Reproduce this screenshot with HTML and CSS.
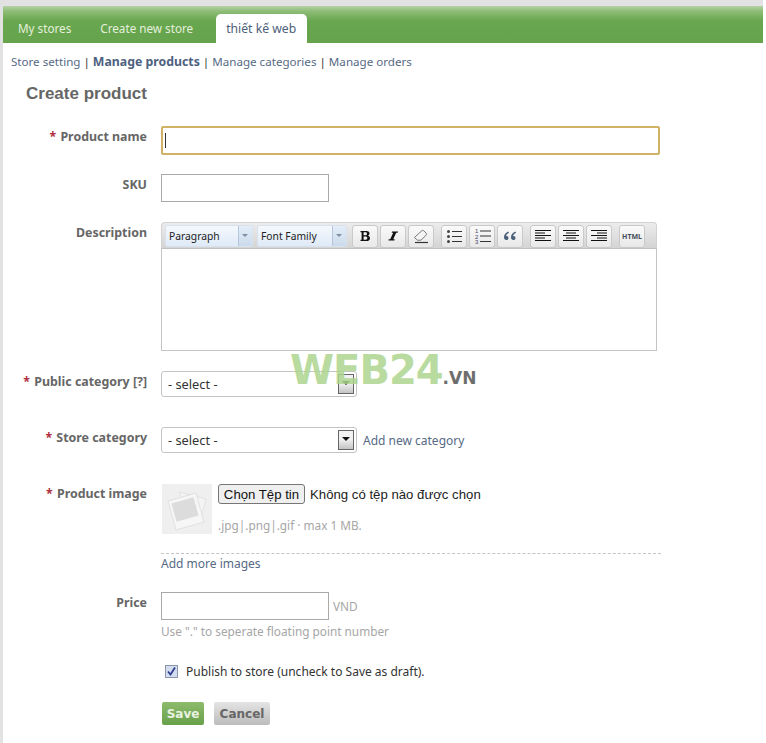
FILE: index.html
```html
<!DOCTYPE html>
<html lang="en">
<head>
    <meta charset="UTF-8">
    <meta name="viewport" content="width=device-width, initial-scale=1.0">
    <title>Create product</title>
    <link rel="stylesheet" href="styles.css">
</head>
<body>
  <div class="page">
    <nav class="tabs">
      <a class="tab">My stores</a>
      <a class="tab">Create new store</a>
      <a class="tab tab-active">thiết kế web</a>
    </nav>

    <div class="subnav">
      <a>Store setting</a> <span class="sep">|</span>
      <a class="current">Manage products</a> <span class="sep">|</span>
      <a>Manage categories</a> <span class="sep">|</span>
      <a>Manage orders</a>
    </div>

    <h1 class="title">Create product</h1>

    <form class="form">
      <div class="row row-name">
        <label class="label"><span class="req">*</span> Product name</label>
        <div class="field"><div class="input input-focus"><i class="caret"></i></div></div>
      </div>

      <div class="row row-sku">
        <label class="label">SKU</label>
        <div class="field"><div class="input input-short"></div></div>
      </div>

      <div class="row row-desc">
        <label class="label">Description</label>
        <div class="field">
          <div class="editor">
            <div class="toolbar">
              <div class="combo combo-para"><span>Paragraph</span><i class="combo-arrow"></i></div>
              <div class="combo combo-font"><span>Font Family</span><i class="combo-arrow"></i></div>

              <div class="tool">
                <svg width="14" height="14" viewBox="0 0 14 14"><path d="M2.500 2h6c2.200 0 3 1 3 2.600 0 1.200-.8 1.900-1.800 2.200 1.400.2 2.300 1.100 2.300 2.400 0 1.900-1.300 2.800-3.400 2.800h-6.100v-1.200h1.100v-7.600h-1.100zM5.600 3.300v2.900h1.900c.9 0 1.400-.5 1.400-1.500s-.5-1.400-1.400-1.400zM5.600 7.400v3.300h2.100c1 0 1.600-.5 1.600-1.600 0-1.200-.6-1.700-1.600-1.700z" fill="#111"/></svg>
              </div>
              <div class="tool">
                <svg width="14" height="14" viewBox="0 0 14 14"><path d="M6 2.500h6l-.3 1.300h-1.500l-3 6.400h1.500l-.3 1.300h-6l.3-1.300h1.500l3-6.400h-1.500z" fill="#111"/></svg>
              </div>
              <div class="tool">
                <svg width="18" height="16" viewBox="0 0 18 16"><path d="M2.500 9.500l7-6.500c.8-.7 1.800-.7 2.500 0l2 2c.7.700.6 1.500 0 2.200l-5 5h-3.500z" fill="#f4f4f4" stroke="#777"/><path d="M3 14.500h13" stroke="#333" stroke-width="1.200"/></svg>
              </div>

              <div class="tool tool-gap">
                <svg width="16" height="14" viewBox="0 0 16 14"><g fill="#444"><rect x="1" y="1" width="3" height="3" rx="1.500"/><rect x="1" y="6" width="3" height="3" rx="1.500"/><rect x="1" y="11" width="3" height="3" rx="1.500"/></g><g stroke="#333"><path d="M6 2.500h10M6 7.500h10M6 12.500h10"/></g></svg>
              </div>
              <div class="tool">
                <svg width="17" height="16" viewBox="0 0 17 16"><g fill="#446" font-family="Liberation Sans, sans-serif" font-size="6"><text x="1" y="5">1</text><text x="1" y="10.500">2</text><text x="1" y="16">3</text></g><g stroke="#333"><path d="M6 3h11M6 8h11M6 13.500h11"/></g></svg>
              </div>
              <div class="tool">
                <svg width="14" height="12" viewBox="0 0 14 12"><path d="M5.500 1.500C2.800 2.500 1 4.500 1 7.200 1 9 2 10 3.300 10 4.600 10 5.500 9 5.500 7.900 5.500 6.700 4.700 5.900 3.500 5.900c-.2 0-.4 0-.5.100.3-1.200 1.300-2.400 3-3.300zM12.500 1.500C9.800 2.500 8 4.500 8 7.200 8 9 9 10 10.300 10c1.300 0 2.200-1 2.200-2.100 0-1.200-.8-2-2-2-.2 0-.4 0-.5.100.3-1.200 1.300-2.400 3-3.300z" fill="#4a5f78"/></svg>
              </div>

              <div class="tool tool-gap">
                <svg width="16" height="14" viewBox="0 0 16 14"><path d="M0 1.500h16M0 4h10M0 6.500h16M0 9h10M0 11.500h16" stroke="#111"/></svg>
              </div>
              <div class="tool">
                <svg width="16" height="14" viewBox="0 0 16 14"><path d="M0 1.500h16M3 4h10M0 6.500h16M3 9h10M0 11.500h16" stroke="#111"/></svg>
              </div>
              <div class="tool">
                <svg width="16" height="14" viewBox="0 0 16 14"><path d="M0 1.500h16M6 4h10M0 6.500h16M6 9h10M0 11.500h16" stroke="#111"/></svg>
              </div>

              <div class="tool tool-gap tool-html">HTML</div>
            </div>
            <div class="editor-body"></div>
          </div>
        </div>
      </div>

      <div class="row row-public">
        <label class="label"><span class="req">*</span> Public category [?]</label>
        <div class="field">
          <div class="select"><span>- select -</span><i class="select-arrow"></i></div>
        </div>
      </div>

      <div class="row row-store">
        <label class="label"><span class="req">*</span> Store category</label>
        <div class="field field-inline">
          <div class="select"><span>- select -</span><i class="select-arrow"></i></div>
          <a class="add-link">Add new category</a>
        </div>
      </div>

      <div class="row row-image">
        <label class="label"><span class="req">*</span> Product image</label>
        <div class="field">
          <div class="image-box">
            <div class="thumb">
              <svg width="50" height="50" viewBox="0 0 50 50">
                <rect width="50" height="50" fill="#efefef"/>
                <path d="M17 8l27 7-6 22-9-2z" fill="#f4f4f4" stroke="#e2e2e2"/>
                <path d="M6 17l28-8 8 29-28 8z" fill="#f6f6f6" stroke="#e0e0e0"/>
                <path d="M9.500 19.500l22-6.300 5 18.300-22 6.300z" fill="#dcdcdc"/>
              </svg>
            </div>
            <div class="upload">
              <div class="file-line">
                <button type="button" class="file-btn">Chọn Tệp tin</button>
                <span class="file-name">Không có tệp nào được chọn</span>
              </div>
              <div class="hint hint-types">.jpg|.png|.gif · max 1 MB.</div>
            </div>
          </div>
          <div class="more"><a>Add more images</a></div>
        </div>
      </div>

      <div class="row row-price">
        <label class="label">Price</label>
        <div class="field">
          <div class="price-line"><div class="input input-short"></div><span class="hint">VND</span></div>
          <div class="hint hint-price">Use "." to seperate floating point number</div>
        </div>
      </div>

      <div class="publish">
        <span class="check">
          <svg width="9" height="9" viewBox="0 0 9 9"><path d="M1 4.500l2.500 3 4.500-7" fill="none" stroke="#2f3f8f" stroke-width="1.800"/></svg>
        </span>
        <span>Publish to store (uncheck to Save as draft).</span>
      </div>

      <div class="actions">
        <button type="button" class="btn btn-save">Save</button>
        <button type="button" class="btn btn-cancel">Cancel</button>
      </div>
    </form>

    <div class="watermark"><span class="mark-web">WEB24</span><span class="mark-vn">.VN</span></div>
  </div>
</body>
</html>
```

FILE: styles.css
```css
html, body {
  margin: 0;
  padding: 0;
  background-color: #fff;
}

body {
  font-family: "Noto Sans", Tahoma, sans-serif;
  font-size: 12px;
  color: #444;
  overflow: hidden;
}

.page {
  position: relative;
  width: 763px;
  height: 743px;
  box-sizing: border-box;
  padding: 6px 0 0 3px;
  background-color: #e2e2e2;
}

.tabs {
  display: flex;
  align-items: flex-end;
  height: 37px;
  padding-left: 1px;
  background: linear-gradient(#b5d2a6 0, #8fbd78 5px, #68a64f 15px, #66a34d 100%);
}

.tab {
  padding: 0 14px;
  font-size: 11.7px;
  line-height: 29px;
  color: #e4f0dc;
  white-space: nowrap;
}

.tab:nth-child(2) {
  margin-left: 1px;
}

.tab-active {
  width: 91px;
  box-sizing: border-box;
  margin-left: 9px;
  padding: 0 10px;
  font-size: 12.2px;
  color: #4d6079;
  background-color: #fff;
  border-radius: 5px 5px 0 0;
}

.subnav,
.title,
.form {
  background-color: #fff;
}

.subnav {
  height: 38px;
  box-sizing: border-box;
  padding: 12px 0 0 8px;
  font-size: 11.6px;
  line-height: 14px;
  color: #566a85;
  white-space: nowrap;
}

.subnav .current {
  font-size: 12.3px;
  font-weight: bold;
  color: #4d6180;
}

.sep {
  color: #333;
}

.title {
  margin: 0;
  height: 33px;
  padding: 1px 0 0 23px;
  box-sizing: border-box;
  font-family: "Liberation Sans", Arial, sans-serif;
  font-size: 17px;
  font-weight: bold;
  line-height: 24px;
  color: #666;
}

.form {
  height: 629px;
  padding-top: 12px;
  box-sizing: border-box;
  color: #444;
}

.row {
  display: flex;
}

.label {
  width: 144px;
  flex: none;
  margin-right: 14px;
  padding-top: 3px;
  text-align: right;
  font-size: 12.4px;
  font-weight: bold;
  color: #666;
  line-height: 16px;
  white-space: nowrap;
}

.req {
  margin-right: 1px;
  color: #b03040;
}

.field {
  flex: 1;
  min-width: 0;
}

.input {
  box-sizing: border-box;
  height: 28px;
  border: 1px solid #a9a9a9;
  background-color: #fff;
}

.input-focus {
  width: 499px;
  height: 29px;
  border: 2px solid #d0b267;
  border-radius: 2px;
  padding: 5px 0 0 2px;
}

.caret {
  display: block;
  width: 1px;
  height: 15px;
  background-color: #333;
}

.input-short {
  width: 168px;
}

.row-sku {
  margin-top: 19px;
}

.row-desc {
  margin-top: 20px;
}

.editor {
  width: 496px;
  height: 129px;
  box-sizing: border-box;
}

.toolbar {
  display: flex;
  align-items: center;
  height: 27px;
  box-sizing: border-box;
  padding: 1px 0 0 3px;
  background: linear-gradient(#ececec, #d4d4d4);
  border: 1px solid #d2d2d2;
  border-bottom: 1px solid #c0c0c0;
  border-radius: 4px 4px 0 0;
}

.editor-body {
  height: 102px;
  box-sizing: border-box;
  border: 1px solid #c4c4c4;
  border-top: none;
  background-color: #fff;
}

.combo {
  display: flex;
  justify-content: space-between;
  height: 22px;
  box-sizing: border-box;
  margin-right: 4px;
  background: linear-gradient(#f4f8fd, #dfeaf7);
  border: 1px solid #d8e2ee;
  border-radius: 2px;
  font-size: 10.3px;
  line-height: 20px;
  color: #222;
}

.combo span {
  padding-left: 3px;
}

.combo-para {
  width: 88px;
}

.combo-font {
  width: 90px;
  margin-right: 5px;
}

.combo-arrow {
  position: relative;
  width: 13px;
  border-left: 1px solid #b4c6dc;
  background: linear-gradient(#e4edf8, #cbdaec);
}

.combo-arrow::after {
  content: "";
  position: absolute;
  left: 3px;
  top: 8px;
  border: 3px solid transparent;
  border-top: 3px solid #7d8da3;
}

.tool {
  display: flex;
  align-items: center;
  justify-content: center;
  width: 26px;
  height: 23px;
  box-sizing: border-box;
  margin-right: 2px;
  background: linear-gradient(#fafafa, #e8e8e8);
  border: 1px solid #c9c9c9;
  border-radius: 3px;
}

.tool-gap {
  margin-left: 5px;
}

.tool-html {
  font-size: 7px;
  font-weight: bold;
  color: #444e5a;
}

.row-public {
  margin-top: 20px;
}

.select {
  display: flex;
  align-items: center;
  justify-content: space-between;
  width: 196px;
  height: 26px;
  box-sizing: border-box;
  padding: 0 1px 0 6px;
  border: 1px solid #c4c4c4;
  border-radius: 3px;
  color: #333;
  font-size: 12.8px;
}

.select-arrow {
  position: relative;
  width: 16px;
  height: 20px;
  box-sizing: border-box;
  margin-right: 1px;
  border: 1px solid #666;
  background: linear-gradient(#f2f2f2 45%, #c4c4c4);
}

.select-arrow::after {
  content: "";
  position: absolute;
  left: 3px;
  top: 6px;
  border: 4px solid transparent;
  border-top: 4px solid #111;
}

.row-store {
  margin-top: 30px;
}

.field-inline {
  display: flex;
  align-items: center;
}

.add-link {
  margin-left: 6px;
  color: #566a85;
}

.row-image {
  margin-top: 31px;
}

.row-image .label {
  padding-top: 2px;
}

.image-box {
  display: flex;
  width: 500px;
  height: 70px;
  padding-left: 1px;
  box-sizing: border-box;
  border-bottom: 1px dashed #c4c4c4;
}

.thumb {
  width: 50px;
  height: 50px;
  margin-right: 6px;
}

.file-btn {
  width: 87px;
  height: 20px;
  padding: 0;
  box-sizing: border-box;
  font-family: "Liberation Sans", Arial, sans-serif;
  font-size: 13.2px;
  color: #111;
  background-color: #efefef;
  border: 1px solid #767676;
  border-radius: 3px;
}

.file-line {
  display: flex;
  align-items: center;
}

.file-name {
  margin-left: 5px;
  font-family: "Liberation Sans", Arial, sans-serif;
  font-size: 13.2px;
  color: #222;
}

.hint {
  font-size: 11.8px;
  color: #a6a6a6;
}

.hint-types {
  margin-top: 13px;
}

.more {
  margin-top: 3px;
  line-height: 14px;
  color: #566a85;
}

.row-price {
  margin-top: 21px;
}

.price-line {
  display: flex;
  align-items: center;
}

.price-line .hint {
  margin-left: 4px;
}

.hint-price {
  margin-top: 4px;
  line-height: 14px;
}

.publish {
  display: flex;
  align-items: center;
  margin: 25px 0 0 162px;
  height: 16px;
  color: #333;
}

.check {
  display: flex;
  align-items: center;
  justify-content: center;
  width: 13px;
  height: 13px;
  box-sizing: border-box;
  margin-right: 8px;
  border: 1px solid #8b96a8;
  background-color: #d4dcef;
}

.actions {
  display: flex;
  margin: 23px 0 0 159px;
}

.btn {
  height: 23px;
  padding: 0;
  border: none;
  border-radius: 2px;
  font-family: "DejaVu Sans", Verdana, sans-serif;
  font-size: 12px;
  font-weight: bold;
}

.btn-save {
  width: 42px;
  margin-right: 10px;
  color: #eaf3e2;
  background: linear-gradient(#8dbb6c, #68a04a);
}

.btn-cancel {
  width: 56px;
  color: #666;
  background: linear-gradient(#e4e4e4, #bcbcbc);
}

/* logo stamped on top of the screenshot */
.watermark {
  position: absolute;
  left: 290px;
  top: 347px;
  display: flex;
  align-items: baseline;
  font-family: "DejaVu Sans", sans-serif;
  font-weight: bold;
  white-space: nowrap;
}

.mark-web {
  font-size: 40px;
  line-height: 46px;
  letter-spacing: -1px;
  color: #add58f;
  opacity: 0.85;
}

.mark-vn {
  font-size: 17px;
  color: #6e6e6e;
}
```
